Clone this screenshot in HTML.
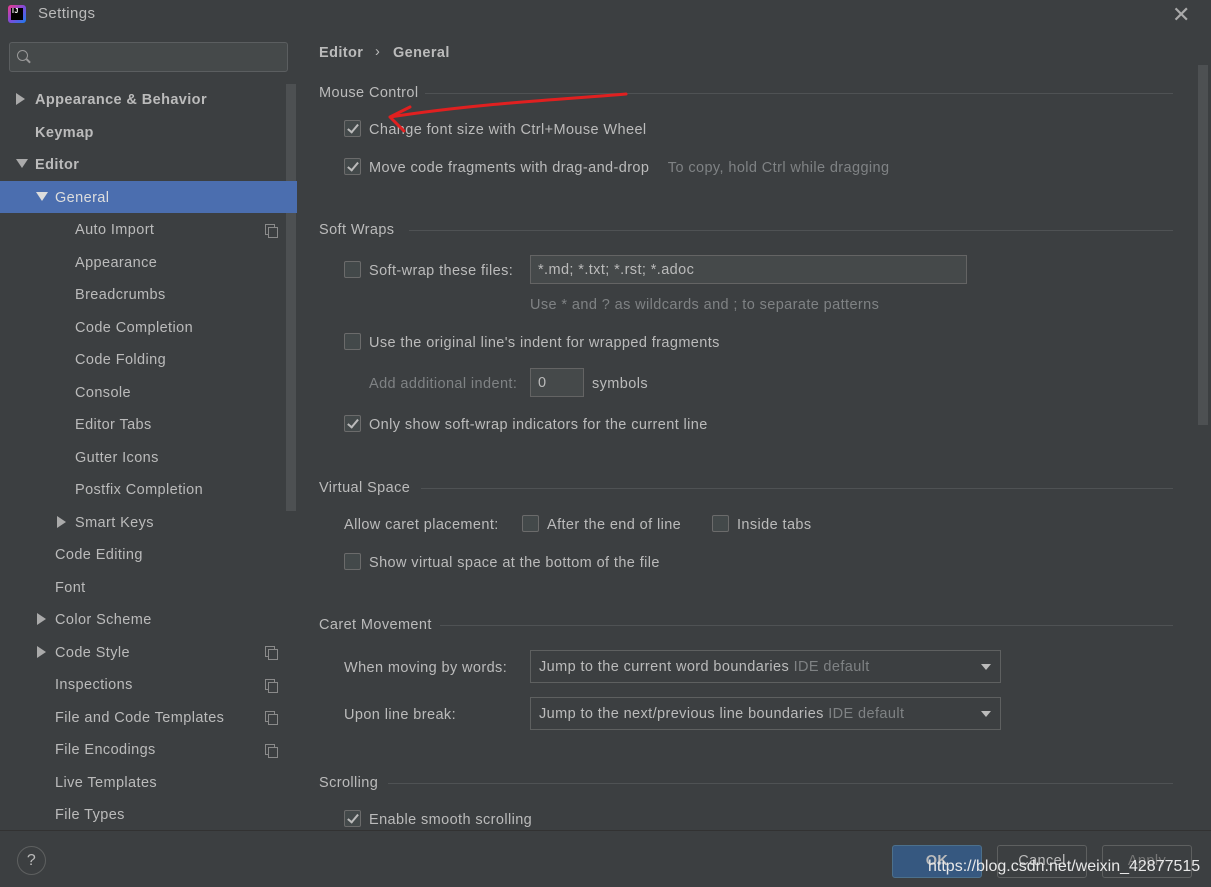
<!DOCTYPE html>
<html><head><meta charset="utf-8"><style>
*{margin:0;padding:0;box-sizing:border-box}
body{width:1211px;height:887px;background:#3c3f41;font-family:"Liberation Sans",sans-serif;font-size:14.5px;letter-spacing:0.4px;color:#bbbbbb;position:relative;overflow:hidden}
.a{position:absolute;white-space:nowrap}
.t{line-height:18px}
.side{position:absolute;left:0;top:37px;width:297px;height:793px;background:#3c3f41}
.cb{position:absolute;width:17px;height:17px;border:1px solid #6b6b6b;background:#43494a;border-radius:2px}
.cb.on::after{content:"";position:absolute;left:5px;top:1px;width:4px;height:9px;border:solid #bbb;border-width:0 2px 2px 0;transform:rotate(40deg)}
.sec{position:absolute;height:1px;background:#4f5254}
.inp{position:absolute;border:1px solid #646464;background:#45494a;height:29px;line-height:29px;padding-left:7px}
.dd{position:absolute;border:1px solid #5e6060;background:#3c3f41;height:33px;line-height:33px;padding-left:8px}
.dd::after{content:"";position:absolute;right:9px;top:13px;border:5px solid transparent;border-top:6px solid #bbb}
.g{color:#7f8284}
.tri{position:absolute;width:0;height:0}
.tr{border-top:6px solid transparent;border-bottom:6px solid transparent;border-left:9px solid #aaa}
.td{border-left:6px solid transparent;border-right:6px solid transparent;border-top:9px solid #aaa}
.ic{position:absolute;width:10px;height:11px;border:1px solid #8a8a8a}
.ic::after{content:"";position:absolute;left:2px;top:2px;width:8px;height:9px;border:1px solid #8a8a8a;background:#3c3f41}
.btn{position:absolute;top:845px;height:33px;width:90px;border:1px solid #5e6060;border-radius:3px;text-align:center;line-height:31px}
</style></head><body>
<div class="a" style="left:8px;top:5px;width:18px;height:18px;background:linear-gradient(135deg,#f03c8c,#7e4bd8,#1a7cf0);border-radius:3px"></div>
<div class="a" style="left:11px;top:8px;width:12px;height:12px;background:#000;color:#fff;font-size:7px;font-weight:bold;line-height:8px;padding-left:1px">IJ</div>
<div class="a t" style="left:38px;top:5px;font-size:15px">Settings</div>
<div class="a" style="left:1172px;top:2px;font-size:22px;color:#aaa">✕</div>

<div class="side"></div>
<div class="a" style="left:9px;top:42px;width:279px;height:30px;border:1px solid #5b5e60;border-radius:3px;background:#45494a"></div>
<div class="a" style="left:17px;top:50px;width:11px;height:11px;border:1.5px solid #999;border-radius:50%"></div>
<div class="a" style="left:26px;top:60px;width:5px;height:1.5px;background:#999;transform:rotate(45deg)"></div>
<div class="a" style="left:286px;top:84px;width:10px;height:427px;background:#4d5052"></div>
<div class="a" style="left:0;top:181px;width:297px;height:32px;background:#4b6eaf"></div>

<div class="tri tr" style="left:16px;top:93px"></div><div class="a t" style="left:35px;top:91px;font-weight:bold">Appearance &amp; Behavior</div>
<div class="a t" style="left:35px;top:124px;font-weight:bold">Keymap</div>
<div class="tri td" style="left:16px;top:159px"></div><div class="a t" style="left:35px;top:156px;font-weight:bold">Editor</div>
<div class="tri td" style="left:36px;top:192px;border-top-color:#ddd"></div><div class="a t" style="left:55px;top:189px;color:#ddd">General</div>
<div class="a t" style="left:75px;top:221px">Auto Import</div><div class="ic" style="left:265px;top:224px"></div>
<div class="a t" style="left:75px;top:254px">Appearance</div>
<div class="a t" style="left:75px;top:286px">Breadcrumbs</div>
<div class="a t" style="left:75px;top:319px">Code Completion</div>
<div class="a t" style="left:75px;top:351px">Code Folding</div>
<div class="a t" style="left:75px;top:384px">Console</div>
<div class="a t" style="left:75px;top:416px">Editor Tabs</div>
<div class="a t" style="left:75px;top:449px">Gutter Icons</div>
<div class="a t" style="left:75px;top:481px">Postfix Completion</div>
<div class="tri tr" style="left:57px;top:516px"></div><div class="a t" style="left:75px;top:514px">Smart Keys</div>
<div class="a t" style="left:55px;top:546px">Code Editing</div>
<div class="a t" style="left:55px;top:579px">Font</div>
<div class="tri tr" style="left:37px;top:613px"></div><div class="a t" style="left:55px;top:611px">Color Scheme</div>
<div class="tri tr" style="left:37px;top:646px"></div><div class="a t" style="left:55px;top:644px">Code Style</div><div class="ic" style="left:265px;top:646px"></div>
<div class="a t" style="left:55px;top:676px">Inspections</div><div class="ic" style="left:265px;top:679px"></div>
<div class="a t" style="left:55px;top:709px">File and Code Templates</div><div class="ic" style="left:265px;top:711px"></div>
<div class="a t" style="left:55px;top:741px">File Encodings</div><div class="ic" style="left:265px;top:744px"></div>
<div class="a t" style="left:55px;top:774px">Live Templates</div>
<div class="a t" style="left:55px;top:806px">File Types</div>

<div class="a t" style="left:319px;top:44px;font-weight:bold">Editor</div>
<div class="a t" style="left:375px;top:43px">›</div>
<div class="a t" style="left:393px;top:44px;font-weight:bold">General</div>
<div class="a" style="left:1198px;top:65px;width:10px;height:360px;background:#4d5052"></div>

<div class="a t" style="left:319px;top:84px">Mouse Control</div><div class="sec" style="left:425px;top:93px;width:748px"></div>
<div class="cb on" style="left:344px;top:120px"></div><div class="a t" style="left:369px;top:121px">Change font size with Ctrl+Mouse Wheel</div>
<div class="cb on" style="left:344px;top:158px"></div><div class="a t" style="left:369px;top:159px">Move code fragments with drag-and-drop <span class="g" style="margin-left:14px">To copy, hold Ctrl while dragging</span></div>
<svg class="a" style="left:360px;top:85px" width="270" height="50"><path d="M266 9 C210 14 120 18 30 32 M30 32 L50 22 M30 32 L44 46" stroke="#e02020" stroke-width="3" fill="none" stroke-linecap="round"/></svg>

<div class="a t" style="left:319px;top:221px">Soft Wraps</div><div class="sec" style="left:409px;top:230px;width:764px"></div>
<div class="cb" style="left:344px;top:261px"></div><div class="a t" style="left:369px;top:262px">Soft-wrap these files:</div>
<div class="inp" style="left:530px;top:255px;width:437px">*.md; *.txt; *.rst; *.adoc</div>
<div class="a t g" style="left:530px;top:296px">Use * and ? as wildcards and ; to separate patterns</div>
<div class="cb" style="left:344px;top:333px"></div><div class="a t" style="left:369px;top:334px">Use the original line's indent for wrapped fragments</div>
<div class="a t g" style="left:369px;top:375px">Add additional indent:</div>
<div class="inp" style="left:530px;top:368px;width:54px">0</div>
<div class="a t" style="left:592px;top:375px">symbols</div>
<div class="cb on" style="left:344px;top:415px"></div><div class="a t" style="left:369px;top:416px">Only show soft-wrap indicators for the current line</div>

<div class="a t" style="left:319px;top:479px">Virtual Space</div><div class="sec" style="left:421px;top:488px;width:752px"></div>
<div class="a t" style="left:344px;top:516px">Allow caret placement:</div>
<div class="cb" style="left:522px;top:515px"></div><div class="a t" style="left:547px;top:516px">After the end of line</div>
<div class="cb" style="left:712px;top:515px"></div><div class="a t" style="left:737px;top:516px">Inside tabs</div>
<div class="cb" style="left:344px;top:553px"></div><div class="a t" style="left:369px;top:554px">Show virtual space at the bottom of the file</div>

<div class="a t" style="left:319px;top:616px">Caret Movement</div><div class="sec" style="left:440px;top:625px;width:733px"></div>
<div class="a t" style="left:344px;top:659px">When moving by words:</div>
<div class="dd" style="left:530px;top:650px;width:471px">Jump to the current word boundaries <span class="g">IDE default</span></div>
<div class="a t" style="left:344px;top:706px">Upon line break:</div>
<div class="dd" style="left:530px;top:697px;width:471px">Jump to the next/previous line boundaries <span class="g">IDE default</span></div>

<div class="a t" style="left:319px;top:774px">Scrolling</div><div class="sec" style="left:388px;top:783px;width:785px"></div>
<div class="cb on" style="left:344px;top:810px"></div><div class="a t" style="left:369px;top:811px">Enable smooth scrolling</div>

<div class="a" style="left:0;top:830px;width:1211px;height:1px;background:#323232"></div>
<div class="a" style="left:17px;top:846px;width:29px;height:29px;border:1px solid #5e6060;border-radius:50%;text-align:center;line-height:27px;font-size:16px">?</div>
<div class="btn" style="left:892px;background:#365880;border-color:#4c708c;font-weight:bold;width:90px">OK</div>
<div class="btn" style="left:997px">Cancel</div>
<div class="btn" style="left:1102px;color:#777">Apply</div>
<div class="a" style="left:928px;top:858px;font-size:16px;letter-spacing:0;color:#e8e8e8">https://blog.csdn.net/weixin_42877515</div>
</body></html>
